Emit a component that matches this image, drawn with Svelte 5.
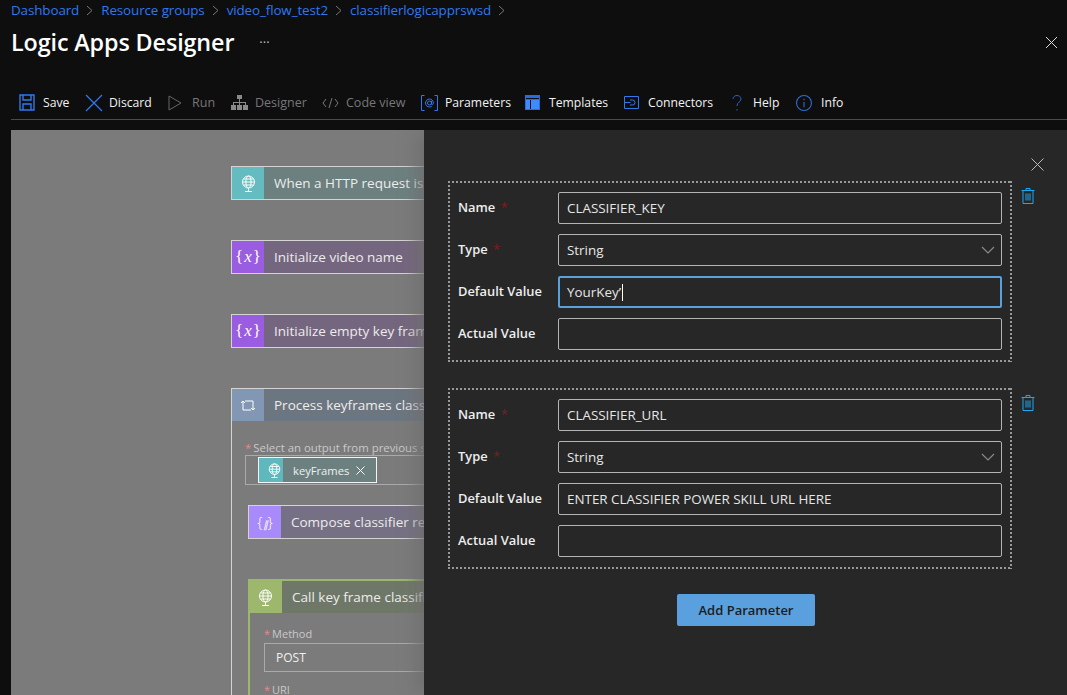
<script>
  const crumbs = ['Dashboard', 'Resource groups', 'video_flow_test2', 'classifierlogicapprswsd'];
  const groups = [
    { name: 'CLASSIFIER_KEY', def: 'YourKey\u2019', focus: true },
    { name: 'CLASSIFIER_URL', def: 'ENTER CLASSIFIER POWER SKILL URL HERE', focus: false }
  ];
</script>

{#snippet globe(size)}
  <svg width={size} height={size} viewBox="0 0 16 17" fill="none" stroke="#fff" stroke-width="1">
    <circle cx="8" cy="7" r="6" />
    <ellipse cx="8" cy="7" rx="2.6" ry="6" />
    <path d="M2 7h12M3 4h10M3 10h10M8 13v3M4.500 16.500h7" />
  </svg>
{/snippet}

{#snippet varIcon()}
  <span class="var-icon">&#123;<i>x</i>&#125;</span>
{/snippet}

<div class="page">
  <header>
    <nav class="crumbs">
      {#each crumbs as c}
        <a href="#top">{c}</a>
        <svg class="sep" width="7" height="11" viewBox="0 0 7 11" fill="none" stroke="#777" stroke-width="1"><path d="M1 1l5 4.500L1 10" /></svg>
      {/each}
    </nav>
    <div class="title-row">
      <h1>Logic Apps Designer</h1>
      <span class="dots">···</span>
      <svg class="close-top" width="13" height="13" viewBox="0 0 13 13" stroke="#ddd" stroke-width="1"><path d="M1 1l11 11M12 1L1 12" /></svg>
    </div>
    <div class="toolbar">
      <button class="save">
        <svg width="16" height="17" viewBox="0 0 16 17" fill="none" stroke="#2f78ee" stroke-width="1.400"><path d="M1 1h14v15H1zM4 1v5h8V1M4 16v-6h8v6" /></svg>
        Save
      </button>
      <button class="discard">
        <svg width="18" height="18" viewBox="0 0 18 18" stroke="#2f78ee" stroke-width="1.200"><path d="M1 1l16 16M17 1L1 17" /></svg>
        Discard
      </button>
      <button class="off run">
        <svg width="14" height="16" viewBox="0 0 14 16" fill="none" stroke="#666" stroke-width="1"><path d="M1 1l12 7-12 7z" /></svg>
        Run
      </button>
      <button class="off designer">
        <svg width="17" height="15" viewBox="0 0 17 15" fill="#8a8a8a"><path d="M6 0h5v4H6zM0 10h5v5H0zM6 10h5v5H6zM12 10h5v5h-5z" /><path d="M8 4h1v3h6v3h-1V8H9v2H8V8H3v2H2V7h6z" /></svg>
        Designer
      </button>
      <button class="off code">
        <svg width="17" height="12" viewBox="0 0 17 12" fill="none" stroke="#777" stroke-width="1"><path d="M4 2L1 6l3 4M13 2l3 4-3 4M10 1L7 11" /></svg>
        Code view
      </button>
      <button class="params">
        <svg width="17" height="16" viewBox="0 0 17 16" fill="none" stroke="#2f78ee" stroke-width="1"><path d="M3.500 .5H.5v15h3M13.500 .5h3v15h-3" /><circle cx="8.500" cy="8" r="2" /><path d="M10.500 6v3c0 1 1.800 1 1.800-1 0-2.500-1.800-4-3.800-4s-4 1.700-4 4 1.800 4 4 4c1 0 1.800-.3 2.300-.6" /></svg>
        Parameters
      </button>
      <button class="templates">
        <svg width="15" height="15" viewBox="0 0 15 15"><path fill="#2b6be0" d="M0 0h15v15H0z" /><path fill="#0e0e0f" d="M1 3h13v1H1zM5 5h1v9H5z" /><path fill="#3d8bfd" d="M1 5h4v9H1zM6 5h8v9H6z" /></svg>
        Templates
      </button>
      <button class="connectors">
        <svg width="15" height="13" viewBox="0 0 15 13" fill="none" stroke="#2f78ee" stroke-width="1"><path d="M.5 .5h14v12H.5zM.5 6.500h6M6 4h2.500a2.500 2.500 0 0 1 0 5H6" /></svg>
        Connectors
      </button>
      <button class="help">
        <svg width="10" height="16" viewBox="0 0 10 16" fill="none" stroke="#2563c9" stroke-width="1"><path d="M1 4c0-2 1.600-3.500 4-3.500S9 2 9 4c0 3-4 3-4 7M5 14v1.500" /></svg>
        Help
      </button>
      <button class="info">
        <svg width="16" height="16" viewBox="0 0 15 15" fill="none" stroke="#2f6fd8" stroke-width="1"><circle cx="7.500" cy="7.500" r="7" /><path d="M7.500 6.500v5M7.500 3.500v1.500" /></svg>
        Info
      </button>
    </div>
  </header>

  <main>
    <section class="canvas">
      <div class="card teal"><span class="ico">{@render globe(17)}</span><span class="lbl">When a HTTP request is received</span></div>
      <div class="card purple"><span class="ico">{@render varIcon()}</span><span class="lbl">Initialize video name</span></div>
      <div class="card purple"><span class="ico">{@render varIcon()}</span><span class="lbl">Initialize empty key frames array</span></div>

      <div class="scope">
        <div class="card slate flat">
          <span class="ico">
            <svg width="16" height="13" viewBox="0 0 16 13" fill="none" stroke="#fff" stroke-width="1"><path d="M3 2v9h8M1 4l2-2 2 2M5 2h8v9M11 9l2 2 2-2" /></svg>
          </span>
          <span class="lbl">Process keyframes classifier</span>
        </div>
        <div class="scope-body">
          <div class="req select-req"><b>*</b>Select an output from previous steps</div>
          <div class="token-box">
            <span class="chip">
              <span class="chip-ico">{@render globe(15)}</span>
              keyFrames
              <svg width="9" height="9" viewBox="0 0 9 9" stroke="#fff" stroke-width="1"><path d="M.5 .5l8 8M8.500 .5l-8 8" /></svg>
            </span>
          </div>
          <div class="card violet"><span class="ico"><span class="compose">&#123;<i>∥</i>&#125;</span></span><span class="lbl short">Compose classifier request</span></div>
          <div class="http">
            <div class="http-head"><span class="ico">{@render globe(17)}</span><span class="lbl short">Call key frame classifier</span></div>
            <div class="http-body">
              <div class="req small"><b>*</b>Method</div>
              <div class="post">POST</div>
              <div class="req small uri"><b>*</b>URI</div>
            </div>
          </div>
        </div>
      </div>
    </section>

    <aside class="panel">
      <svg class="close-panel" width="13" height="13" viewBox="0 0 13 13" stroke="#bbb" stroke-width="1"><path d="M.5 .5l12 12M12.500 .5l-12 12" /></svg>
      {#each groups as g}
        <div class="group-row">
          <div class="group">
            <div class="row"><span class="name">Name <b>*</b></span><div class="field">{g.name}</div></div>
            <div class="row">
              <span class="name">Type <b>*</b></span>
              <div class="field select">
                String
                <svg width="14" height="8" viewBox="0 0 14 8" fill="none" stroke="#8a8a8a" stroke-width="1.200"><path d="M1 1l6 6 6-6" /></svg>
              </div>
            </div>
            <div class="row">
              <span class="name">Default Value</span>
              <div class="field" class:focus={g.focus}>{g.def}{#if g.focus}<span class="caret"></span>{/if}</div>
            </div>
            <div class="row"><span class="name">Actual Value</span><div class="field"></div></div>
          </div>
          <svg class="trash" width="14" height="16" viewBox="0 0 14 16" fill="none" stroke="#1aa7f5" stroke-width="1"><path d="M.5 2.500h13M2 2.500v13h10v-13M5 2.500V.5h4v2M5 5.500v7M7 5.500v7M9 5.500v7" /></svg>
        </div>
      {/each}
      <div class="actions"><button class="add">Add Parameter</button></div>
    </aside>
  </main>
</div>

<style>
  :global(body) {
    background: #0e0e0f;
    font-family: "Open Sans", "Noto Sans", sans-serif;
    overflow: hidden;
  }

  .page {
    height: 695px;
    overflow: hidden;
    display: flex;
    flex-direction: column;
  }

  header {
    height: 130px;
    flex: none;
    background: #0e0e0f;
    color: #fff;
    padding-left: 11px;
    box-sizing: border-box;
  }

  .crumbs {
    display: flex;
    align-items: center;
    height: 20px;
    font-size: 13.400px;
    letter-spacing: -0.1px;
  }

  .crumbs a {
    color: #2f78ee;
    text-decoration: none;
  }

  .sep {
    margin: 0 8px 0 7px;
  }

  .title-row {
    display: flex;
    align-items: center;
    height: 44px;
    padding-right: 9px;
  }

  h1 {
    margin: 0;
    font-size: 23.300px;
    font-weight: 600;
    letter-spacing: -0.1px;
    color: #fff;
  }

  .dots {
    margin-left: 25px;
    color: #bbb;
    font-size: 13px;
  }

  .close-top {
    margin-left: auto;
  }

  .toolbar {
    height: 36px;
    box-sizing: border-box;
    display: flex;
    align-items: center;
    margin-top: 20px;
    border-bottom: 1px solid #4a4a4a;
    padding: 2px 0 0 8px;
  }

  .toolbar button {
    background: none;
    border: none;
    padding: 0;
    display: flex;
    align-items: center;
    gap: 8px;
    color: #f2f2f2;
    font: inherit;
    font-size: 12.200px;
    white-space: nowrap;
  }

  .toolbar button.off {
    color: #777;
    font-size: 12.500px;
  }

  .save { width: 66px; }
  .toolbar .discard { width: 83px; gap: 6px; }
  .toolbar .run { width: 63px; gap: 10px; }
  .toolbar .designer { width: 91px; gap: 7px; }
  .toolbar .code { width: 99px; gap: 7px; }
  .toolbar .params { width: 104px; gap: 7px; }
  .toolbar .templates { width: 99px; gap: 9px; }
  .toolbar .connectors { width: 108px; gap: 9px; }
  .toolbar .help { width: 64px; gap: 11px; }
  .toolbar .info { gap: 9px; }

  main {
    flex: 1;
    position: relative;
    padding-left: 11px;
    overflow: hidden;
  }

  .canvas {
    height: 100%;
    background: #7b7b7b;
    padding: 36px 0 0 220px;
    box-sizing: border-box;
    color: #eee;
  }

  .card {
    display: flex;
    align-items: stretch;
    height: 34px;
    width: 300px;
    box-sizing: border-box;
    border: 1px solid #d4d4d4;
    margin-bottom: 40px;
    font-size: 13.500px;
  }

  .ico {
    width: 32px;
    flex: none;
    display: flex;
    align-items: center;
    justify-content: center;
    color: #fff;
  }

  .lbl {
    margin-left: 10px;
    width: 150px;
    overflow: hidden;
    display: flex;
    align-items: center;
    white-space: nowrap;
    color: #ececec;
  }

  .short {
    width: 133px;
  }

  .teal { background: #6d8080; }
  .teal .ico { background: #64bcc0; }
  .purple { background: #75667f; }
  .purple .ico { background: #9a5ce0; }
  .slate { background: #6c7680; }
  .slate .ico { background: #8297b3; }
  .violet { background: #767084; }
  .violet .ico { background: #a98afa; }

  .var-icon {
    font-family: "Liberation Serif", serif;
    font-size: 17px;
  }

  .var-icon i {
    padding: 0 1px;
  }

  .compose {
    font-size: 15px;
    font-weight: 300;
  }

  .compose i {
    font-size: 10px;
  }

  .scope {
    width: 300px;
    border: 1px solid #d4d4d4;
    border-bottom: none;
    height: 340px;
    box-sizing: border-box;
  }

  .flat {
    border: none;
    margin: 0;
    height: 32px;
  }

  .scope-body {
    padding: 17px 0 0 13px;
  }

  .req {
    font-size: 11.400px;
    line-height: 14px;
    color: #c9c9c9;
    white-space: nowrap;
    height: 14px;
    margin-top: 3px;
  }

  .select-req {
    width: 178px;
    overflow: hidden;
  }

  .req b {
    color: #e08a8a;
    font-weight: 400;
    margin-right: 2px;
  }

  .token-box {
    height: 30px;
    box-sizing: border-box;
    border: 1px solid #aaa;
    margin-bottom: 20px;
    padding-left: 12px;
    display: flex;
    align-items: center;
    width: 286px;
  }

  .chip {
    width: 119px;
    height: 26px;
    flex: none;
    box-sizing: border-box;
    border: 1px solid #f4f4f4;
    background: #6d8080;
    display: flex;
    align-items: center;
    font-size: 11.200px;
    color: #f0f0f0;
  }

  .chip svg:last-child {
    margin-left: 7px;
  }

  .chip-ico {
    width: 24px;
    height: 100%;
    background: #5fb8bd;
    display: flex;
    align-items: center;
    justify-content: center;
    margin-right: 10px;
  }

  .scope-body .card {
    margin-left: 3px;
    width: 283px;
  }

  .http {
    margin-left: 3px;
    width: 283px;
  }

  .http-head {
    display: flex;
    height: 34px;
    border-top: 2px solid #9db76d;
    box-sizing: border-box;
    background: #6f7868;
    font-size: 13.500px;
  }

  .http-head .ico {
    width: 34px;
    background: #9db76d;
  }

  .http-body {
    border-left: 2px solid #9db76d;
    padding: 14px 0 0 14px;
    height: 90px;
  }

  .small {
    margin: 0 0 2px;
    font-size: 11px;
  }

  .post {
    height: 29px;
    box-sizing: border-box;
    border: 1px solid #aaa;
    padding-left: 11px;
    line-height: 27px;
    font-size: 12px;
    color: #f0f0f0;
    margin-bottom: 11px;
  }

  .panel {
    position: absolute;
    top: 0;
    right: 0;
    bottom: 0;
    width: 643px;
    box-sizing: border-box;
    background: #272727;
    padding: 51px 0 0 24px;
    box-shadow: -12px 0 14px -4px rgba(110, 110, 110, 0.8);
  }

  .close-panel {
    position: absolute;
    top: 28px;
    right: 23px;
  }

  .group-row {
    display: flex;
    align-items: flex-start;
    gap: 9px;
    margin-bottom: 26px;
  }

  .group {
    width: 564px;
    box-sizing: border-box;
    padding: 11px 10px 12px;
    display: flex;
    flex-direction: column;
    gap: 10px;
    background-image:
      repeating-linear-gradient(90deg, #999 0 2px, transparent 2px 4px),
      repeating-linear-gradient(90deg, #999 0 2px, transparent 2px 4px),
      repeating-linear-gradient(180deg, #999 0 2px, transparent 2px 4px),
      repeating-linear-gradient(180deg, #999 0 2px, transparent 2px 4px);
    background-size: 100% 2px, 100% 2px, 2px 100%, 2px 100%;
    background-position: top, bottom, left, right;
    background-repeat: no-repeat;
  }

  .row {
    display: flex;
    align-items: center;
    height: 32px;
  }

  .name {
    width: 100px;
    flex: none;
    font-size: 12.900px;
    font-weight: 600;
    color: #eee;
    position: relative;
    top: -1px;
    white-space: nowrap;
  }

  .name b {
    color: #7f1d1d;
    font-weight: 400;
    margin-left: 2px;
  }

  .field {
    flex: 1;
    height: 32px;
    box-sizing: border-box;
    border: 1px solid #b4b4b4;
    border-radius: 2px;
    padding-left: 8px;
    display: flex;
    align-items: center;
    font-size: 13.400px;
    color: #e6e6e6;
  }

  .select {
    justify-content: space-between;
    padding-right: 6px;
  }

  .focus {
    border: 2px solid #5b9fdb;
    padding-left: 7px;
  }

  .caret {
    width: 1px;
    height: 17px;
    background: #fff;
    margin-left: 1px;
  }

  .trash {
    margin-top: 7px;
  }

  .actions {
    width: 596px;
    display: flex;
    justify-content: center;
    margin-top: -1px;
  }

  .add {
    width: 138px;
    height: 32px;
    border: none;
    border-radius: 2px;
    background: #5a9fde;
    color: #1c1c1c;
    font: inherit;
    font-size: 13px;
    font-weight: 600;
  }
</style>
